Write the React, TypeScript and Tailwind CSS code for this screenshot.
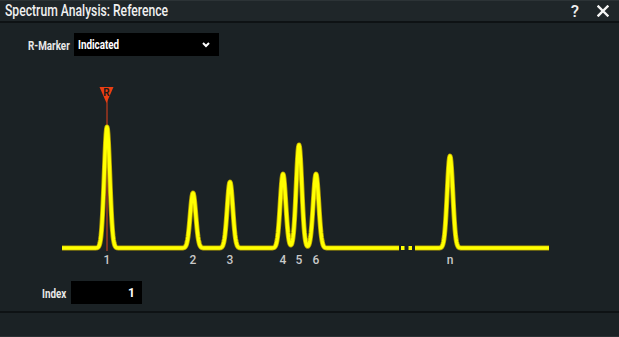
import React from "react";

const peaks: [number, number][] = [
  [107, 121],
  [193, 55],
  [230, 66],
  [283, 74],
  [299, 103],
  [316, 74],
  [450, 92],
];
const BASE = 248;
const SIG = 2.8;

function y(x: number) {
  let s = 0;
  for (const [c, h] of peaks) s += h * Math.exp(-((x - c) ** 2) / (2 * SIG * SIG));
  return BASE - s;
}

function seg(a: number, b: number) {
  let d = "";
  for (let x = a; x <= b + 0.001; x += 0.5) {
    d += (x === a ? "M" : "L") + x.toFixed(1) + " " + y(x).toFixed(2) + " ";
  }
  return d;
}

const pathD = seg(62, 399) + seg(415, 549);

const labels: [number, string][] = [
  [107, "1"],
  [193, "2"],
  [230, "3"],
  [283, "4"],
  [299, "5"],
  [316, "6"],
  [450, "n"],
];

const font = { fontFamily: '"Roboto", "Liberation Sans", sans-serif' };

export default function App() {
  return (
    <div className="w-[619px] h-[337px] bg-[#1b2225] flex flex-col overflow-hidden text-white" style={font}>
      <div className="h-[23px] shrink-0 bg-[#1f2629] border-t border-[#2c3336] border-b-2 border-b-[#0e1214] flex items-center justify-between pl-[5px] pr-[10px]">
        <span className="inline-block whitespace-nowrap origin-left scale-x-[0.76] text-[16px] font-medium leading-none text-[#f0f0f0]">Spectrum Analysis: Reference</span>
        <div className="flex items-center gap-[18px]">
          <span className="text-[17px] font-medium leading-none text-[#f0f0f0]">?</span>
          <svg width="12" height="12" viewBox="0 0 12 12">
            <path d="M1.5 1.5 L10.5 10.5 M10.5 1.5 L1.5 10.5" stroke="#f5f5f5" strokeWidth="2.4" strokeLinecap="square" />
          </svg>
        </div>
      </div>
      <div className="flex-1 flex flex-col">
        <div className="h-[23px] flex items-center mt-[10px] pl-[28px]">
          <div className="w-[46px] whitespace-nowrap">
            <span className="inline-block origin-left scale-x-[0.82] text-[12px] font-bold text-[#e8e8e8]">R-Marker</span>
          </div>
          <div className="w-[145px] h-[23px] bg-black flex items-center justify-between pl-[4px] pr-[9px]">
            <span className="inline-block origin-left scale-x-[0.82] whitespace-nowrap text-[12px] font-bold text-white">Indicated</span>
            <svg width="8" height="6" viewBox="0 0 8 6">
              <path d="M1 1 L4 4 L7 1" stroke="#fff" strokeWidth="2" fill="none" />
            </svg>
          </div>
        </div>
        <svg width="619" height="225" viewBox="0 56 619 225" className="block shrink-0">
          <line x1="107" y1="97" x2="107" y2="251" stroke="#e5401c" strokeWidth="1" />
          <path d={pathD} fill="none" stroke="#b8a400" strokeWidth="5" strokeLinejoin="round" />
          <path d={pathD} fill="none" stroke="#ffff00" strokeWidth="3.4" strokeLinejoin="round" />
          <rect x="401" y="246" width="3.5" height="4" fill="#ffff00" />
          <rect x="408.5" y="246" width="3.5" height="4" fill="#ffff00" />
          <polygon points="99.5,87 113.5,87 106.5,103" fill="#ec3f12" />
          <text x="106.5" y="96" textAnchor="middle" fontSize="10" fontWeight="bold" fill="#1b1b1b" style={font}>R</text>
          {labels.map(([x, t]) => (
            <text key={t} x={x} y="264" textAnchor="middle" fontSize="12" fontWeight="500" fill="#c9c9c9" style={font}>{t}</text>
          ))}
        </svg>
        <div className="h-[23px] flex items-center pl-[42px]">
          <div className="w-[29px] whitespace-nowrap">
            <span className="inline-block origin-left scale-x-[0.82] text-[12px] font-bold text-[#e8e8e8]">Index</span>
          </div>
          <div className="w-[71px] h-[23px] bg-black flex items-center justify-end pr-[7px]">
            <span className="text-[12px] font-bold text-white">1</span>
          </div>
        </div>
      </div>
      <div className="h-[26px] shrink-0 border-t-2 border-[#0e1214] border-b border-b-[#2a3134] bg-[#1b2225]" />
    </div>
  );
}
